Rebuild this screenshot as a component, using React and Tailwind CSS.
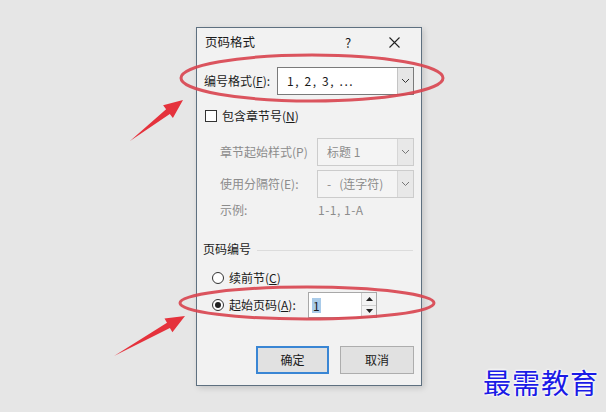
import React from 'react';

const font = { fontFamily: '"Noto Sans CJK SC", "Noto Sans", sans-serif' };

// tapered arrow polygon from tail to tip
function arrowPoints(x1, y1, x2, y2) {
  const dx = x2 - x1;
  const dy = y2 - y1;
  const len = Math.hypot(dx, dy);
  const ux = dx / len;
  const uy = dy / len;
  const nx = -uy;
  const ny = ux;
  const head = 19;
  const headW = 8;
  const shaftW = 3;
  const bx = x2 - ux * head;
  const by = y2 - uy * head;
  const pts = [
    [x1, y1],
    [bx + nx * shaftW, by + ny * shaftW],
    [bx + nx * headW, by + ny * headW],
    [x2, y2],
    [bx - nx * headW, by - ny * headW],
    [bx - nx * shaftW, by - ny * shaftW],
  ];
  return pts.map(p => p.map(v => v.toFixed(1)).join(',')).join(' ');
}

function Chevron({ color = '#333' }) {
  return (
    <svg width="9" height="6" viewBox="0 0 9 6">
      <path d="M1 1 L4.5 4.5 L8 1" fill="none" stroke={color} strokeWidth="1" />
    </svg>
  );
}

function Select({ value, disabled, width, spaced }) {
  return (
    <div
      className={`h-[28px] flex border ${
        disabled ? 'border-[#cccccc] bg-[#f4f4f4] text-[#8c8c8c]' : 'border-[#7a7a7a] bg-white text-[#1a1a1a]'
      }`}
      style={{ width }}
    >
      <div className={`flex-1 flex items-center pl-[9px] whitespace-pre ${spaced ? 'tracking-[1.6px]' : ''}`}>{value}</div>
      <div
        className={`w-[16px] flex items-center justify-center border-l ${
          disabled ? 'border-[#d6d6d6] bg-[#e8e8e8]' : 'border-[#c4c4c4] bg-[#e6e6e6]'
        }`}
      >
        <Chevron color={disabled ? '#777' : '#333'} />
      </div>
    </div>
  );
}

export default function App() {
  return (
    <div className="relative w-[606px] h-[412px] overflow-hidden bg-[#e6e6e6] text-[12px] text-[#1a1a1a]" style={font}>
      <div className="pl-[196px] pt-[27px]">
        <div className="w-[226px] h-[359px] border border-[#5e7080] bg-[#f2f2f2] shadow-[2px_2px_6px_rgba(0,0,0,0.15)] flex flex-col">
          {/* title bar */}
          <div className="h-[29px] flex items-center pl-[8px]">
            <span className="text-[12.5px]">页码格式</span>
            <span className="ml-[90px] text-[13px]">?</span>
            <span className="ml-[38px]">
              <svg width="11" height="11" viewBox="0 0 11 11">
                <path d="M0.5 0.5 L10.5 10.5 M10.5 0.5 L0.5 10.5" stroke="#222" strokeWidth="1.1" />
              </svg>
            </span>
          </div>

          {/* number format */}
          <div className="mt-[10px] flex items-center pl-[7px]">
            <span className="w-[73px]">
              编号格式(<span className="underline">F</span>):
            </span>
            <Select value="1, 2, 3, ..." width={137} spaced />
          </div>

          {/* include chapter */}
          <div className="mt-[10px] h-[22px] flex items-center pl-[8px]">
            <span className="w-[12px] h-[12px] border border-[#333] bg-white" />
            <span className="ml-[5px]">
              包含章节号(<span className="underline">N</span>)
            </span>
          </div>

          <div className="mt-[11px] flex items-center pl-[23px] text-[#8c8c8c]">
            <span className="w-[97px]">章节起始样式(P)</span>
            <Select value="标题 1" disabled width={97} />
          </div>

          <div className="mt-[4px] flex items-center pl-[23px] text-[#8c8c8c]">
            <span className="w-[97px]">使用分隔符(E):</span>
            <Select value="-   (连字符)" disabled width={97} />
          </div>

          <div className="mt-[4px] h-[16px] flex items-center pl-[23px] text-[#8c8c8c]">
            <span className="w-[98px]">示例:</span>
            <span className="tracking-[0.5px]">1-1, 1-A</span>
          </div>

          {/* page numbering */}
          <div className="mt-[23px] h-[16px] flex items-center pl-[6px] pr-[8px]">
            <span>页码编号</span>
            <div className="flex-1 ml-[6px] h-px bg-[#dcdcdc] mt-[2px]" />
          </div>

          <div className="mt-[11px] h-[20px] flex items-center pl-[15px]">
            <span className="w-[12px] h-[12px] rounded-full border border-[#333] bg-white" />
            <span className="ml-[5px]">
              续前节(<span className="underline">C</span>)
            </span>
          </div>

          <div className="mt-[4px] flex items-center pl-[15px]">
            <span className="w-[12px] h-[12px] rounded-full border border-[#333] bg-white flex items-center justify-center">
              <span className="w-[6px] h-[6px] rounded-full bg-[#222]" />
            </span>
            <span className="ml-[5px] w-[79px]">
              起始页码(<span className="underline">A</span>):
            </span>
            <div className="w-[69px] h-[26px] border border-[#a8a8a8] bg-white flex">
              <div className="flex-1 flex items-center pl-[3px]">
                <span className="bg-[#a9cbe9] px-[1px] leading-[15px]">1</span>
              </div>
              <div className="w-[15px] flex flex-col border-l border-[#cfcfcf]">
                <div className="flex-1 flex items-center justify-center border-b border-[#cfcfcf] bg-[#f3f3f3]">
                  <svg width="7" height="4" viewBox="0 0 7 4"><path d="M0 4 L3.5 0 L7 4 Z" fill="#222" /></svg>
                </div>
                <div className="flex-1 flex items-center justify-center bg-[#f3f3f3]">
                  <svg width="7" height="4" viewBox="0 0 7 4"><path d="M0 0 L3.5 4 L7 0 Z" fill="#222" /></svg>
                </div>
              </div>
            </div>
          </div>

          {/* buttons */}
          <div className="mt-[28px] flex pl-[59px] gap-[11px]">
            <button className="w-[73px] h-[28px] border-2 border-[#3a86d4] bg-[#e1e1e1] text-[12px]">确定</button>
            <button className="w-[74px] h-[28px] border border-[#adadad] bg-[#e1e1e1] text-[12px]">取消</button>
          </div>
        </div>
      </div>

      {/* annotations */}
      <svg className="absolute inset-0 pointer-events-none" width="606" height="412">
        <ellipse cx="312" cy="78" rx="131" ry="23" fill="none" stroke="#d8434e" strokeWidth="3" opacity="0.9" />
        <ellipse cx="307" cy="303" rx="127" ry="16" fill="none" stroke="#d8434e" strokeWidth="3" opacity="0.9" />
        <polygon points={arrowPoints(130, 141, 183, 100)} fill="#e5323c" />
        <polygon points={arrowPoints(114, 356, 185, 316)} fill="#e5323c" />
      </svg>

      <div
        className="absolute left-[483px] top-[364px] text-[28px] leading-[36px] text-[#1a1ae6] tracking-[1px]"
        style={{
          fontFamily: '"Noto Sans CJK SC", sans-serif',
          textShadow: '0 0 3px #fff, 0 0 3px #fff, 0 0 2px #fff',
        }}
      >
        最需教育
      </div>
    </div>
  );
}
